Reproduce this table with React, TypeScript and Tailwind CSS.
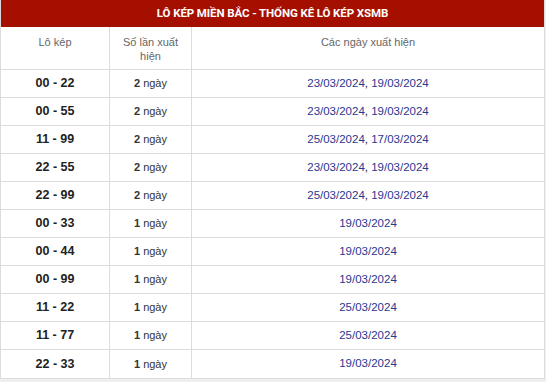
import React from "react";

const rows: [string, number, string[]][] = [
  ["00 - 22", 2, ["23/03/2024", "19/03/2024"]],
  ["00 - 55", 2, ["23/03/2024", "19/03/2024"]],
  ["11 - 99", 2, ["25/03/2024", "17/03/2024"]],
  ["22 - 55", 2, ["23/03/2024", "19/03/2024"]],
  ["22 - 99", 2, ["25/03/2024", "19/03/2024"]],
  ["00 - 33", 1, ["19/03/2024"]],
  ["00 - 44", 1, ["19/03/2024"]],
  ["00 - 99", 1, ["19/03/2024"]],
  ["11 - 22", 1, ["25/03/2024"]],
  ["11 - 77", 1, ["25/03/2024"]],
  ["22 - 33", 1, ["19/03/2024"]],
];

export default function App() {
  return (
    <div className="w-[546px] h-[382px] bg-[#efefef] overflow-hidden" style={{ fontFamily: '"Liberation Sans", Arial, sans-serif' }}>
      <div className="w-[545px] bg-white border-r border-b border-l border-[#dcdcdc]">
        <div className="h-[27px] bg-[#a50f00] flex items-center justify-center text-white font-bold text-[11.5px] tracking-[-0.1px]" style={{ fontFamily: 'Roboto, "Liberation Sans", sans-serif' }}>
          LÔ KÉP MIỀN BẮC - THỐNG KÊ LÔ KÉP XSMB
        </div>
        <div className="flex h-[43px] border-b border-[#dcdcdc] text-[11px] leading-[14px] text-[#666]">
          <div className="w-[109px] border-r border-[#dcdcdc] text-center pt-[8px]">Lô kép</div>
          <div className="w-[82px] border-r border-[#dcdcdc] text-center pt-[8px] px-[6px]">Số lần xuất hiện</div>
          <div className="flex-1 text-center pt-[8px]">Các ngày xuất hiện</div>
        </div>
        {rows.map(([pair, n, dates], i) => (
          <div key={i} className={"flex h-[28px] items-stretch" + (i < rows.length - 1 ? " border-b border-[#dcdcdc]" : "")}>
            <div className="w-[109px] border-r border-[#dcdcdc] flex items-center justify-center font-bold text-[12.5px] text-[#222]">{pair}</div>
            <div className="w-[82px] border-r border-[#dcdcdc] flex items-center justify-center text-[11px] text-[#333]">
              <span className="font-bold mr-[3px]">{n}</span>ngày
            </div>
            <div className="flex-1 flex items-center justify-center text-[11.5px] text-[#222]">
              {dates.map((d, j) => (
                <React.Fragment key={j}>
                  {j > 0 && <span>,&nbsp;</span>}
                  <span className="text-[#28368f]">{d}</span>
                </React.Fragment>
              ))}
            </div>
          </div>
        ))}
      </div>
    </div>
  );
}
